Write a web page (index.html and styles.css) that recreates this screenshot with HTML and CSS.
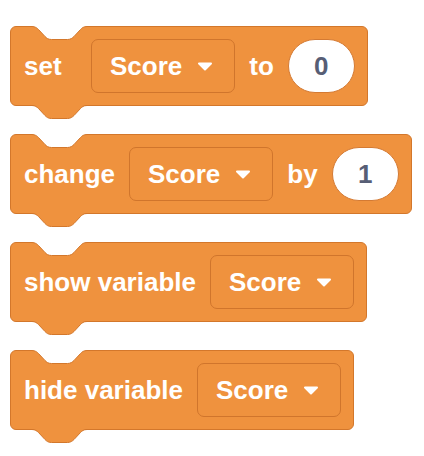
FILE: index.html
```html
<!DOCTYPE html>
<html>
<head>
<meta charset="utf-8">
<link rel="stylesheet" href="styles.css">
</head>
<body>
<div class="stack">
  <div class="block">
    <svg class="notch" width="55" height="15" viewBox="0 0 55 15"><path class="notch-fill" d="M0 0 L0 0.5 c3 0 5 1.5 6.5 3 l6.5 7 c1.5 1.5 3 3 6.5 3 h16 c3 0 5 -1.5 6.5 -3 l6.5 -7 c1.5 -1.5 3 -3 6.5 -3 L55 0 Z"/><path class="edge" d="M0 0.5 c3 0 5 1.5 6.5 3 l6.5 7 c1.5 1.5 3 3 6.5 3 h16 c3 0 5 -1.5 6.5 -3 l6.5 -7 c1.5 -1.5 3 -3 6.5 -3"/></svg>
    <span class="label label-set">set</span>
    <span class="dropdown"><span class="dd-text">Score</span><svg class="arrow" width="16" height="9" viewBox="0 0 16 9"><path d="M2 1.5 H14 L8 7.5 Z"/></svg></span>
    <span class="label">to</span>
    <span class="number">0</span>
    <svg class="tab" width="55" height="15" viewBox="0 0 55 15"><path class="tab-fill" d="M0 0 L0 0.5 c3 0 5 1.5 6.5 3 l6.5 7 c1.5 1.5 3 3 6.5 3 h16 c3 0 5 -1.5 6.5 -3 l6.5 -7 c1.5 -1.5 3 -3 6.5 -3 L55 0 Z"/><path class="edge" d="M0 0.5 c3 0 5 1.5 6.5 3 l6.5 7 c1.5 1.5 3 3 6.5 3 h16 c3 0 5 -1.5 6.5 -3 l6.5 -7 c1.5 -1.5 3 -3 6.5 -3"/></svg>
  </div>

  <div class="block">
    <svg class="notch" width="55" height="15" viewBox="0 0 55 15"><path class="notch-fill" d="M0 0 L0 0.5 c3 0 5 1.5 6.5 3 l6.5 7 c1.5 1.5 3 3 6.5 3 h16 c3 0 5 -1.5 6.5 -3 l6.5 -7 c1.5 -1.5 3 -3 6.5 -3 L55 0 Z"/><path class="edge" d="M0 0.5 c3 0 5 1.5 6.5 3 l6.5 7 c1.5 1.5 3 3 6.5 3 h16 c3 0 5 -1.5 6.5 -3 l6.5 -7 c1.5 -1.5 3 -3 6.5 -3"/></svg>
    <span class="label">change</span>
    <span class="dropdown"><span class="dd-text">Score</span><svg class="arrow" width="16" height="9" viewBox="0 0 16 9"><path d="M2 1.5 H14 L8 7.5 Z"/></svg></span>
    <span class="label">by</span>
    <span class="number">1</span>
    <svg class="tab" width="55" height="15" viewBox="0 0 55 15"><path class="tab-fill" d="M0 0 L0 0.5 c3 0 5 1.5 6.5 3 l6.5 7 c1.5 1.5 3 3 6.5 3 h16 c3 0 5 -1.5 6.5 -3 l6.5 -7 c1.5 -1.5 3 -3 6.5 -3 L55 0 Z"/><path class="edge" d="M0 0.5 c3 0 5 1.5 6.5 3 l6.5 7 c1.5 1.5 3 3 6.5 3 h16 c3 0 5 -1.5 6.5 -3 l6.5 -7 c1.5 -1.5 3 -3 6.5 -3"/></svg>
  </div>

  <div class="block">
    <svg class="notch" width="55" height="15" viewBox="0 0 55 15"><path class="notch-fill" d="M0 0 L0 0.5 c3 0 5 1.5 6.5 3 l6.5 7 c1.5 1.5 3 3 6.5 3 h16 c3 0 5 -1.5 6.5 -3 l6.5 -7 c1.5 -1.5 3 -3 6.5 -3 L55 0 Z"/><path class="edge" d="M0 0.5 c3 0 5 1.5 6.5 3 l6.5 7 c1.5 1.5 3 3 6.5 3 h16 c3 0 5 -1.5 6.5 -3 l6.5 -7 c1.5 -1.5 3 -3 6.5 -3"/></svg>
    <span class="label">show variable</span>
    <span class="dropdown"><span class="dd-text">Score</span><svg class="arrow" width="16" height="9" viewBox="0 0 16 9"><path d="M2 1.5 H14 L8 7.5 Z"/></svg></span>
    <svg class="tab" width="55" height="15" viewBox="0 0 55 15"><path class="tab-fill" d="M0 0 L0 0.5 c3 0 5 1.5 6.5 3 l6.5 7 c1.5 1.5 3 3 6.5 3 h16 c3 0 5 -1.5 6.5 -3 l6.5 -7 c1.5 -1.5 3 -3 6.5 -3 L55 0 Z"/><path class="edge" d="M0 0.5 c3 0 5 1.5 6.5 3 l6.5 7 c1.5 1.5 3 3 6.5 3 h16 c3 0 5 -1.5 6.5 -3 l6.5 -7 c1.5 -1.5 3 -3 6.5 -3"/></svg>
  </div>

  <div class="block">
    <svg class="notch" width="55" height="15" viewBox="0 0 55 15"><path class="notch-fill" d="M0 0 L0 0.5 c3 0 5 1.5 6.5 3 l6.5 7 c1.5 1.5 3 3 6.5 3 h16 c3 0 5 -1.5 6.5 -3 l6.5 -7 c1.5 -1.5 3 -3 6.5 -3 L55 0 Z"/><path class="edge" d="M0 0.5 c3 0 5 1.5 6.5 3 l6.5 7 c1.5 1.5 3 3 6.5 3 h16 c3 0 5 -1.5 6.5 -3 l6.5 -7 c1.5 -1.5 3 -3 6.5 -3"/></svg>
    <span class="label">hide variable</span>
    <span class="dropdown"><span class="dd-text">Score</span><svg class="arrow" width="16" height="9" viewBox="0 0 16 9"><path d="M2 1.5 H14 L8 7.5 Z"/></svg></span>
    <svg class="tab" width="55" height="15" viewBox="0 0 55 15"><path class="tab-fill" d="M0 0 L0 0.5 c3 0 5 1.5 6.5 3 l6.5 7 c1.5 1.5 3 3 6.5 3 h16 c3 0 5 -1.5 6.5 -3 l6.5 -7 c1.5 -1.5 3 -3 6.5 -3 L55 0 Z"/><path class="edge" d="M0 0.5 c3 0 5 1.5 6.5 3 l6.5 7 c1.5 1.5 3 3 6.5 3 h16 c3 0 5 -1.5 6.5 -3 l6.5 -7 c1.5 -1.5 3 -3 6.5 -3"/></svg>
  </div>
</div>
</body>
</html>
```

FILE: styles.css
```css
html, body {
  margin: 0;
  padding: 0;
  background: #ffffff;
}

body {
  font-family: "Liberation Sans", Arial, Helvetica, sans-serif;
}

.stack {
  display: flex;
  flex-direction: column;
  align-items: flex-start;
  gap: 28px;
  padding: 26px 0 24px 10px;
}

.block {
  position: relative;
  box-sizing: border-box;
  height: 80px;
  display: flex;
  align-items: center;
  gap: 14px;
  padding: 0 12px 0 13px;
  background: #ef923e;
  border: 1px solid #d3772b;
  border-radius: 6px;
}

.notch {
  position: absolute;
  top: -1px;
  left: 21px;
  overflow: visible;
}

.tab {
  position: absolute;
  top: 100%;
  left: 21px;
  overflow: visible;
  z-index: 1;
}

.notch-fill {
  fill: #ffffff;
}

.tab-fill {
  fill: #ef923e;
}

.edge {
  fill: none;
  stroke: #d3772b;
  stroke-width: 1;
}

.label {
  color: #ffffff;
  font-size: 26px;
  font-weight: bold;
  white-space: nowrap;
}

.label-set {
  min-width: 53px;
}

.dropdown {
  box-sizing: border-box;
  height: 54px;
  display: flex;
  align-items: center;
  gap: 15px;
  padding: 0 21px 0 18px;
  border: 1px solid #d0752c;
  border-radius: 7px;
  background: #ef923e;
}

.dd-text {
  color: #ffffff;
  font-size: 26px;
  font-weight: bold;
}

.arrow path {
  fill: #ffffff;
  stroke: #ffffff;
  stroke-width: 2;
  stroke-linejoin: round;
}

.number {
  box-sizing: border-box;
  width: 67px;
  height: 54px;
  display: flex;
  align-items: center;
  justify-content: center;
  background: #ffffff;
  border: 1px solid #d47a33;
  border-radius: 27px;
  color: #575e75;
  font-size: 26px;
  font-weight: bold;
}
```
